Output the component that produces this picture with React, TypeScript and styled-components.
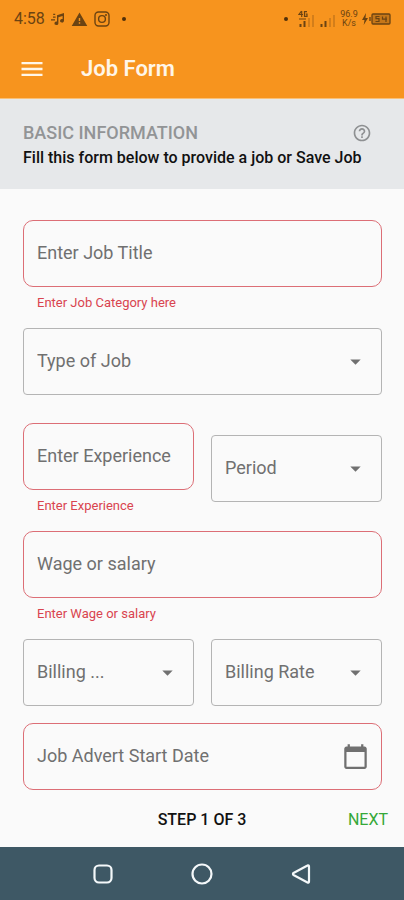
import React from "react";
import styled, { createGlobalStyle } from "styled-components";
import {
  MdArrowDropDown,
  MdCalendarToday,
  MdHelpOutline,
  MdMenu,
  MdWarning,
} from "react-icons/md";

const GlobalStyle = createGlobalStyle`
  * { box-sizing: border-box; }
  body { margin: 0; background: #fafafa; font-family: Roboto, sans-serif; }
  button, input, select { font-family: inherit; margin: 0; }
`;

const Page = styled.div`
  min-height: 100vh;
  display: flex;
  flex-direction: column;
`;

const Header = styled.header`
  background: #f7941e;
  border-bottom: 1px solid #f9c078;
`;

const StatusBar = styled.div`
  height: 38px;
  padding: 0 13px 0 14px;
  display: flex;
  align-items: center;
  justify-content: space-between;
  color: #6b4312;
`;

const StatusGroup = styled.div<{ $gap: number }>`
  display: flex;
  align-items: center;
  gap: ${(p) => p.$gap}px;
`;

const Clock = styled.span`
  font-size: 16px;
  line-height: 20px;
`;

const Dot = styled.span`
  width: 4px;
  height: 4px;
  margin: 0 6px;
  border-radius: 50%;
  background: #51300a;
`;

const Speed = styled.span`
  width: 18px;
  font-size: 9px;
  line-height: 9px;
  text-align: center;
`;

const AppBar = styled.div`
  height: 60px;
  padding: 2px 18px 0;
  display: flex;
  align-items: center;
  gap: 35px;
`;

const IconButton = styled.button<{ $color: string }>`
  display: flex;
  padding: 0;
  border: 0;
  background: none;
  color: ${(p) => p.$color};
  cursor: pointer;
`;

const Title = styled.h1`
  margin: 0;
  font-size: 22px;
  line-height: 28px;
  font-weight: 600;
  color: #fff6e8;
`;

const Intro = styled.section`
  height: 90px;
  padding: 23px 32px 0 23px;
  background: #e6e8ea;
`;

const IntroHeading = styled.div`
  display: flex;
  align-items: center;
  justify-content: space-between;
`;

const SectionTitle = styled.h2`
  margin: 0;
  font-size: 18px;
  line-height: 22px;
  font-weight: 500;
  color: #929496;
`;

const IntroText = styled.p`
  margin: 4px 0 0;
  font-size: 16px;
  line-height: 20px;
  font-weight: 500;
  color: #111;
  white-space: nowrap;
`;

const Form = styled.form`
  flex: 1;
  display: flex;
  flex-direction: column;
`;

const Fields = styled.div`
  padding: 31px 22px 0 23px;
  display: flex;
  flex-direction: column;
  gap: 17px;
`;

const Pair = styled.div`
  display: grid;
  grid-template-columns: 1fr 1fr;
  gap: 17px;
  align-items: center;
`;

const Group = styled.div`
  min-width: 0;
`;

const Spaced = styled.div`
  margin-bottom: 11px;
`;

const Outline = styled.div<{ $required?: boolean }>`
  position: relative;
  display: flex;
  align-items: center;
  height: 67px;
  border: 1px solid ${(p) => (p.$required ? "#dc6e76" : "#b4b4b4")};
  border-radius: ${(p) => (p.$required ? 10 : 4)}px;
`;

const TextInput = styled.input`
  flex: 1;
  min-width: 0;
  height: 100%;
  padding: 0 0 2px 13px;
  border: 0;
  outline: 0;
  background: none;
  font-size: 18px;
  color: #333;
  &::placeholder {
    color: #707070;
    opacity: 1;
  }
`;

const Select = styled.select`
  width: 100%;
  height: 100%;
  padding: 0 40px 2px 13px;
  border: 0;
  outline: 0;
  appearance: none;
  background: none;
  font-size: 18px;
  color: #707070;
  text-overflow: ellipsis;
`;

const Arrow = styled(MdArrowDropDown)`
  position: absolute;
  right: 13px;
  color: #707070;
  pointer-events: none;
`;

const DateButton = styled(IconButton)`
  margin-right: 12px;
`;

const ErrorText = styled.p`
  margin: 0;
  padding: 8px 0 0 14px;
  font-size: 13px;
  line-height: 16px;
  color: #d9444f;
`;

const Footer = styled.footer`
  display: grid;
  grid-template-columns: 1fr auto 1fr;
  align-items: center;
  height: 57px;
  padding: 2px 16px 0;
`;

const Step = styled.span`
  grid-column: 2;
  font-size: 16px;
  line-height: 20px;
  font-weight: 500;
  color: #111;
`;

const Next = styled.button`
  justify-self: end;
  padding: 0;
  border: 0;
  background: none;
  font-size: 16px;
  line-height: 20px;
  color: #35a838;
  cursor: pointer;
`;

const NavBar = styled.nav`
  height: 53px;
  display: flex;
  align-items: center;
  justify-content: center;
  gap: 75px;
  background: #3e5865;
`;

interface FieldProps {
  id: string;
  label: string;
  error?: string;
  children?: React.ReactNode;
}

const TextField = ({ id, label, error, children }: FieldProps) => (
  <Group>
    <Outline $required>
      <TextInput
        id={id}
        type="text"
        size={1}
        placeholder={label}
        aria-label={label}
        aria-describedby={error ? `${id}-error` : undefined}
      />
      {children}
    </Outline>
    {error && <ErrorText id={`${id}-error`}>{error}</ErrorText>}
  </Group>
);

const SelectField = ({ id, label }: FieldProps) => (
  <Outline>
    <Select id={id} aria-label={label} defaultValue="">
      <option value="">{label}</option>
    </Select>
    <Arrow size={25} />
  </Outline>
);

const NoteIcon = () => (
  <svg width="14" height="14" viewBox="0 0 14 14" fill="currentColor" aria-hidden="true">
    <path d="M6 3.2 13 1v7.8a2 1.8 0 1 1-1.4-1.7V4L7.4 5.2v6a2 1.8 0 1 1-1.4-1.6z" />
    <path d="M2 4.5h2.6v1.3H2zM0 7.2h4v1.3H0zM2.2 1.8h2v1.2h-2z" />
  </svg>
);

const CameraIcon = () => (
  <svg width="16" height="16" viewBox="0 0 16 16" fill="none" stroke="currentColor" strokeWidth="1.4" aria-hidden="true">
    <rect x="1" y="1" width="14" height="14" rx="3.5" />
    <circle cx="8" cy="8" r="3.4" />
    <circle cx="12" cy="4" r=".4" />
  </svg>
);

const SignalIcon = ({ network }: { network?: boolean }) => (
  <svg width="17" height="18" viewBox="0 0 17 18" fill="none" stroke="currentColor" aria-hidden="true">
    <path d="M2.5 14v3M6.5 11v6" strokeWidth="2" />
    <path d="M11 8v9M15 5v12" strokeOpacity=".4" strokeWidth="1.3" />
    {network && <path d="M3.5 1 1 4.5h4M3.7 1v6M9 1.6H6.5v4.8H9V4H7.7M1 9h7" strokeWidth="1.2" />}
  </svg>
);

const BatteryIcon = () => (
  <svg width="29" height="14" viewBox="0 0 29 14" fill="none" stroke="currentColor" aria-hidden="true">
    <path d="M4 1 0 8h2.5L1.7 13 6 6H3.5z" fill="currentColor" stroke="none" />
    <path d="M8 5v4" strokeWidth="2" strokeOpacity=".7" />
    <rect x="10" y="2" width="18" height="10" rx="1" fill="currentColor" fillOpacity=".35" strokeWidth="1.3" />
    <path d="M17.5 4.5H14v2.2h3V9.5h-3.5M20.5 4.5v2.7H25M24 4.5v5.5" strokeWidth="1.2" />
  </svg>
);

export default function App() {
  return (
    <Page>
      <GlobalStyle />
      <Header>
        <StatusBar>
          <StatusGroup $gap={6}>
            <Clock>4:58</Clock>
            <NoteIcon />
            <MdWarning size={17} />
            <CameraIcon />
            <Dot />
          </StatusGroup>
          <StatusGroup $gap={4}>
            <Dot />
            <SignalIcon network />
            <SignalIcon />
            <Speed>96.9 K/s</Speed>
            <BatteryIcon />
          </StatusGroup>
        </StatusBar>
        <AppBar>
          <IconButton type="button" aria-label="Menu" $color="#fff6e8">
            <MdMenu size={28} />
          </IconButton>
          <Title>Job Form</Title>
        </AppBar>
      </Header>
      <Intro>
        <IntroHeading>
          <SectionTitle>BASIC INFORMATION</SectionTitle>
          <IconButton type="button" aria-label="Help" $color="#8e9092">
            <MdHelpOutline size={20} />
          </IconButton>
        </IntroHeading>
        <IntroText>Fill this form below to provide a job or Save Job</IntroText>
      </Intro>
      <Form onSubmit={(e) => e.preventDefault()}>
        <Fields>
          <TextField id="title" label="Enter Job Title" error="Enter Job Category here" />
          <Spaced>
            <SelectField id="type" label="Type of Job" />
          </Spaced>
          <Pair>
            <TextField id="experience" label="Enter Experience" error="Enter Experience" />
            <SelectField id="period" label="Period" />
          </Pair>
          <TextField id="wage" label="Wage or salary" error="Enter Wage or salary" />
          <Pair>
            <SelectField id="billing" label="Billing ..." />
            <SelectField id="rate" label="Billing Rate" />
          </Pair>
          <TextField id="start" label="Job Advert Start Date">
            <DateButton type="button" aria-label="Choose date" $color="#707070">
              <MdCalendarToday size={27} />
            </DateButton>
          </TextField>
        </Fields>
        <Footer>
          <Step>STEP 1 OF 3</Step>
          <Next type="submit">NEXT</Next>
        </Footer>
      </Form>
      <NavBar>
        <IconButton type="button" aria-label="Recent apps" $color="#f4f8fa">
          <svg width="24" height="24" viewBox="0 0 24 24" fill="none" stroke="currentColor" strokeWidth="2.2">
            <rect x="3.5" y="3.5" width="17" height="17" rx="4.5" />
          </svg>
        </IconButton>
        <IconButton type="button" aria-label="Home" $color="#f4f8fa">
          <svg width="24" height="24" viewBox="0 0 24 24" fill="none" stroke="currentColor" strokeWidth="2.2">
            <circle cx="12" cy="12" r="9.5" />
          </svg>
        </IconButton>
        <IconButton type="button" aria-label="Back" $color="#f4f8fa">
          <svg width="24" height="24" viewBox="0 0 24 24" fill="none" stroke="currentColor" strokeWidth="2.2" strokeLinejoin="round">
            <path d="M18.5 3.5a1 1 0 0 1 1.5 1v15a1 1 0 0 1-1.5 1L4.5 13a1.2 1.2 0 0 1 0-2z" />
          </svg>
        </IconButton>
      </NavBar>
    </Page>
  );
}
